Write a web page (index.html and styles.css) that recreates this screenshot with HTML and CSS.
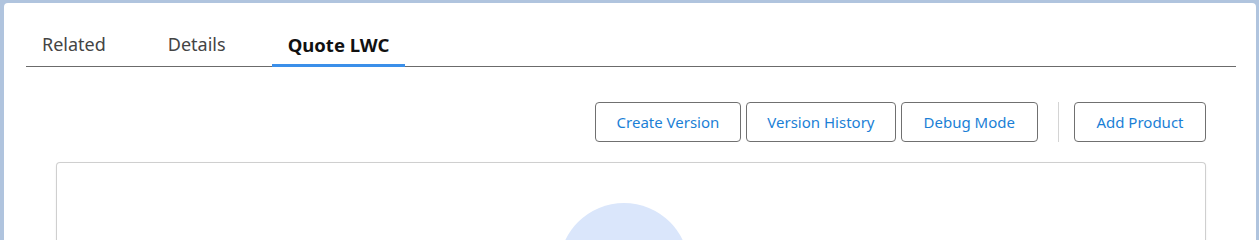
FILE: index.html
```html
<!DOCTYPE html>
<html lang="en">
<head>
<meta charset="utf-8">
<title>Quote LWC</title>
<link rel="stylesheet" href="styles.css">
</head>
<body>
<div class="card">
  <nav class="tabs">
    <div class="tab">Related</div>
    <div class="tab">Details</div>
    <div class="tab active">Quote LWC</div>
  </nav>
  <section class="panel">
    <div class="toolbar">
      <button class="btn">Create Version</button>
      <button class="btn btn-history">Version History</button>
      <button class="btn btn-debug">Debug Mode</button>
      <span class="sep"></span>
      <button class="btn btn-add">Add Product</button>
    </div>
    <div class="content">
      <div class="blob"></div>
    </div>
  </section>
</div>
</body>
</html>
```

FILE: styles.css
```css
html, body {
  margin: 0;
  height: 100%;
  overflow: hidden;
}
body {
  background: #b0c4de;
  font-family: "Noto Sans", "Open Sans", sans-serif;
}
.card {
  margin: 3px 3px 0 4px;
  background: #fff;
  border-radius: 4px 4px 0 0;
  height: calc(100vh - 3px);
  padding: 20px 20px 0 22px;
  box-sizing: border-box;
  overflow: hidden;
}
.tabs {
  display: flex;
  gap: 30px;
  border-bottom: 1px solid #6b6b6b;
  height: 44px;
  box-sizing: border-box;
}
.tab {
  padding: 0 16px 1px;
  font-size: 18px;
  color: #444;
  display: flex;
  align-items: center;
  height: 43px;
  box-sizing: border-box;
}
.tab.active {
  color: #111;
  font-weight: 700;
  font-size: 18.5px;
  border-bottom: 3px solid #3b8fe9;
  height: 44px;
  padding-top: 2px;
  padding-bottom: 0;
  margin-bottom: -1px;
}
.panel {
  padding: 35px 30px 0 30px;
}
.toolbar {
  display: flex;
  justify-content: flex-end;
  align-items: center;
  gap: 5px;
}
.btn {
  height: 40px;
  padding: 0 21px;
  background: #fff;
  border: 1px solid #707070;
  border-radius: 4px;
  color: #1b7fd6;
  font-family: "Noto Sans", "Open Sans", sans-serif;
  font-size: 15px;
}
.btn-history {
  padding: 0 20px;
}
.btn-debug {
  padding: 0 22px;
}
.btn-add {
  padding: 0 21.5px;
}
.sep {
  width: 1px;
  height: 40px;
  background: #d4d4d4;
  margin: 0 10px 0 15px;
}
.content {
  margin-top: 20px;
  border: 1px solid #cfcfcf;
  border-bottom: none;
  border-radius: 4px 4px 0 0;
  height: 200px;
  box-shadow: 0 1px 2px rgba(0,0,0,0.08);
  display: flex;
  justify-content: center;
  padding: 40px 14px 0 0;
  box-sizing: border-box;
}
.blob {
  width: 130px;
  height: 130px;
  border-radius: 50%;
  background: #dae6fb;
  flex: none;
}
```
